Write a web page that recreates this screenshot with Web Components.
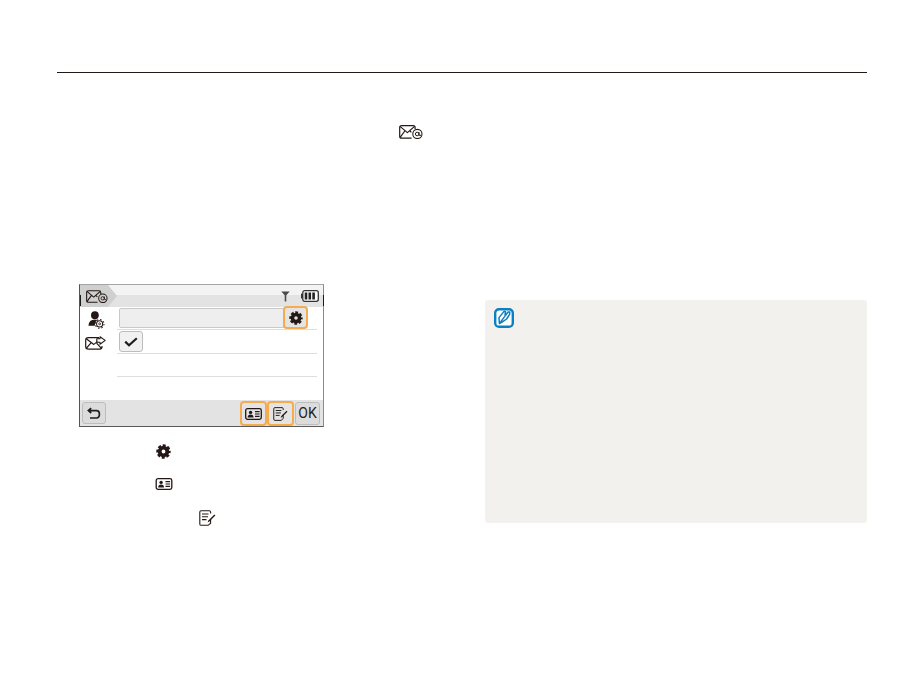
<!DOCTYPE html>
<html>
<head>
<meta charset="utf-8">
<title>Manual page</title>
<style>
  html, body { margin: 0; background: #fff; font-family: "Liberation Sans", Arial, sans-serif; }
</style>
</head>
<body>
<manual-page>
  <ui-icon slot="lead" name="mail-at" size="24 14"></ui-icon>
  <camera-screen slot="left"></camera-screen>
  <icon-line slot="left" indent="77" top="17"><ui-icon name="gear" size="15 15"></ui-icon></icon-line>
  <icon-line slot="left" indent="76" top="19"><ui-icon name="card" size="18 12"></ui-icon></icon-line>
  <icon-line slot="left" indent="120" top="20"><ui-icon name="memo" size="17 16"></ui-icon></icon-line>
  <note-box slot="right"></note-box>
</manual-page>

<script>
// every icon is drawn on its own viewBox, sized through the "size" attribute
const ICONS = {
  'mail-at': `<svg viewBox="0 0 24 14"><g fill="none" stroke="#231815" stroke-width="1.2" stroke-linejoin="round">
      <path d="M12.6 13.2H2.6Q.7 13.2 .7 11.3V2.6Q.7 .7 2.6 .7H14.2Q16.1 .7 16.1 2.6V4.2"/>
      <path d="M1 1.4L8.4 7.6L15.6 1.4M1 12.6L5.8 6M11 6L12.4 7.4"/>
      <circle cx="18.4" cy="9" r="4.6" stroke-width="1.1"/><circle cx="18.2" cy="9" r="1.8" stroke-width="1"/>
      <path d="M20 7V10Q20.6 11 22 10.2" stroke-width="1"/></g></svg>`,
  'gear': `<svg viewBox="0 0 15 15"><g fill="none" stroke="#231815">
      <circle cx="7.5" cy="7.5" r="3.8" stroke-width="3.8"/>
      <circle cx="7.5" cy="7.5" r="6" stroke-width="2.4" stroke-dasharray="3 1.71" stroke-dashoffset="1.5"/></g></svg>`,
  'card': `<svg viewBox="0 0 17 12"><rect x=".7" y=".7" width="15.6" height="10.6" rx="1.8" fill="none" stroke="#231815" stroke-width="1.3"/>
      <circle cx="5.6" cy="4.4" r="1.7" fill="#231815"/><path d="M2.6 9.6Q2.8 6.6 5.6 6.6T8.6 9.6Z" fill="#231815"/>
      <path d="M10 3.6H14.6M10 6H14.6M10 8.4H14.6" stroke="#231815" stroke-width="1.1"/></svg>`,
  'memo': `<svg viewBox="0 0 17 16"><g fill="none" stroke="#231815" stroke-width="1.1">
      <path d="M11.6 9V13.2L9.2 15.3H2.2Q.8 15.3 .8 13.9V2Q.8 .7 2.2 .7H10.2Q11.6 .7 11.6 2V3.4"/>
      <path d="M3 4H9.5M3 6.8H9M3 9.6H7.5"/></g>
      <path d="M8.6 12.4L9.4 10.4L15.4 4.4L16.4 5.4L10.4 11.4Z" fill="#231815"/></svg>`,
  'antenna': `<svg viewBox="0 0 9 11"><path d="M.3 .5H8.7L5.3 4.2V10.6H3.7V4.2Z" fill="#4a4a4a"/></svg>`,
  'battery': `<svg viewBox="0 0 18 12"><rect x="1.8" y=".7" width="15.5" height="10.6" rx="2" fill="#fff" stroke="#333" stroke-width="1.3"/>
      <rect x="0" y="3.6" width="1.8" height="4.8" fill="#333"/>
      <path d="M5 2.6V9.4M8.8 2.6V9.4M12.6 2.6V9.4" stroke="#222" stroke-width="2.6"/></svg>`,
  'user-gear': `<svg viewBox="0 0 17 19"><circle cx="6.8" cy="4.4" r="4.1" fill="#231815"/>
      <path d="M0 15.6Q.4 9 6.8 9Q8.6 9 9.6 9.6Q6.4 11.4 6.8 15.6Z" fill="#231815"/>
      <g fill="none" stroke="#231815"><circle cx="11.8" cy="13.6" r="3.2" stroke-width="1.1"/>
      <circle cx="11.8" cy="13.6" r="4.6" stroke-width="1.1" stroke-dasharray="1.6 2"/><circle cx="11.8" cy="13.6" r="1" stroke-width=".9"/></g></svg>`,
  'mail-send': `<svg viewBox="0 0 21 14"><g fill="none" stroke="#231815" stroke-width="1.2" stroke-linejoin="round">
      <path d="M17 10V10.8Q17 13.2 14.6 13.2H3.4Q.7 13.2 .7 10.6V4.2Q.7 1.6 3.4 1.6H14"/>
      <path d="M1 2.6L8.8 8.4L12.4 5.6M1 12.6L6 6.8M11.6 7.2L16.4 12.4"/>
      <path d="M15 .7L20.2 4.4L15 8.2V6.2H11.8V2.8H15Z" stroke-width="1.1"/></g></svg>`,
  'back': `<svg viewBox="0 0 14 13"><path d="M4.2 1.2L1.4 3.6L4.2 6M1.8 3.6H9.4Q12.4 3.6 12.4 7.2T9.4 11H3" fill="none" stroke="#1e1e1e" stroke-width="1.7"/></svg>`,
  'check': `<svg viewBox="0 0 14 10"><path d="M1.2 4.6L5 8.2L12.8 1.2" fill="none" stroke="#1e1e1e" stroke-width="2.2"/></svg>`,
  'tip': `<svg viewBox="0 0 20 20"><rect x="1.2" y="1.2" width="17.6" height="17.6" rx="3.8" fill="#fff" stroke="#0b7fc4" stroke-width="2.4"/>
      <path d="M5.4 15.6L5 9.6L9.8 3.6H11.4L11 8L14 4H15.8L15.6 6.4L12.6 11L8.4 13.8ZM5.4 15.6L10.6 8.6" fill="none" stroke="#0b7fc4" stroke-width="1.5" stroke-linejoin="round"/></svg>`
};

class UiIcon extends HTMLElement {
  connectedCallback() {
    const [w, h] = (this.getAttribute('size') || '16 16').split(' ');
    const shadow = this.attachShadow({ mode: 'open' });
    shadow.innerHTML = `
      <style>
        :host { display: block; flex: none; width: ${w}px; height: ${h}px; line-height: 0; }
        svg { display: block; width: 100%; height: 100%; }
      </style>
      ${ICONS[this.getAttribute('name')] || ''}`;
  }
}

class IconLine extends HTMLElement {
  constructor() {
    super();
    this.attachShadow({ mode: 'open' }).innerHTML = `
      <style>:host { display: flex; }</style>
      <slot></slot>`;
  }
  connectedCallback() {
    this.style.paddingLeft = this.getAttribute('indent') + 'px';
    this.style.marginTop = this.getAttribute('top') + 'px';
  }
}

const softButton = document.createElement('template');
softButton.innerHTML = `
  <style>
    :host {
      display: flex; align-items: center; justify-content: center;
      box-sizing: border-box; flex: none;
      background: #e9e9e9; border: 1px solid #bdbdbd; border-radius: 3px;
      color: #222; font: 400 14px Roboto, "Liberation Sans", sans-serif;
    }
    :host([hot]) { border: 2px solid #f5ab4e; border-radius: 4px; background: #e4e4e4; }
  </style>
  <slot></slot>`;

class SoftButton extends HTMLElement {
  constructor() {
    super();
    this.attachShadow({ mode: 'open' }).appendChild(softButton.content.cloneNode(true));
  }
}

const cameraScreen = document.createElement('template');
cameraScreen.innerHTML = `
  <style>
    :host {
      display: flex; flex-direction: column; position: relative;
      box-sizing: border-box; width: 245px; height: 143px;
      border: 1px solid #8b8b8b; border-top-color: #a5a5a5;
      border-left-color: #55524f; border-bottom-color: #5c5a58;
      background: #fff;
    }
    .top { height: 22px; flex: none; display: flex; align-items: flex-start;
      background: linear-gradient(#f3f3f3 0 10px, #e3e3e3 10px); }
    .tab { width: 37px; height: 22px; background: #cfcfcf;
      clip-path: polygon(0 0, 28px 0, 37px 11px, 28px 22px, 0 22px);
      display: flex; align-items: center; padding-left: 6px; box-sizing: border-box; }
    .status { margin-left: auto; display: flex; align-items: center; gap: 11px; padding: 5px 4px 0 0; }
    .body { flex: 1; display: grid; grid-template-columns: 37px 1fr; grid-template-rows: 23px 24px 23px; }
    .lead { padding: 4px 0 0 8px; }
    .lead.mail { padding: 6px 0 0 5px; }
    .row { display: flex; align-items: center; margin-right: 6px; border-bottom: 1px solid #dedede; }
    .field { flex: 1; height: 20px; box-sizing: border-box; margin: 0 0 0 2px;
      background: #eeeeee; border: 1px solid #c9c9c9; border-radius: 2px 0 0 2px; }
    .gear { width: 25px; height: 23px; margin: -1px 9px 0 -1px; }
    .tick { width: 24px; height: 21px; margin-left: 2px; background: #f1f1f1; }
    .blank { grid-column: 2; }
    .bottom { height: 26px; flex: none; display: flex; align-items: center;
      background: #e3e3e3; padding: 0 3px 0 2px; margin-top: auto; }
    .back { width: 24px; height: 22px; background: #dcdcdc; }
    .hot { width: 27px; height: 25px; margin-top: 1px; }
    .hot.first { margin-left: auto; }
    .ok { width: 25px; height: 23px; margin: 0 0 0 1px; background: #dcdcdc; }
    .edge { position: absolute; z-index: 1; width: 1px; height: 11px; top: 10px; background: #1d1a18; }
    .edge.l { left: 0; }
    .edge.r { right: -1px; }
  </style>
  <i class="edge l"></i><i class="edge r"></i>
  <div class="top">
    <div class="tab"><ui-icon name="mail-at" size="22 13"></ui-icon></div>
    <div class="status">
      <ui-icon name="antenna" size="9 11"></ui-icon>
      <ui-icon name="battery" size="18 12"></ui-icon>
    </div>
  </div>
  <div class="body">
    <div class="lead"><ui-icon name="user-gear" size="17 18"></ui-icon></div>
    <div class="row">
      <div class="field"></div>
      <soft-button class="gear" hot><ui-icon name="gear" size="14 14"></ui-icon></soft-button>
    </div>
    <div class="lead mail"><ui-icon name="mail-send" size="21 14"></ui-icon></div>
    <div class="row"><soft-button class="tick"><ui-icon name="check" size="14 10"></ui-icon></soft-button></div>
    <div class="row blank"></div>
  </div>
  <div class="bottom">
    <soft-button class="back"><ui-icon name="back" size="14 13"></ui-icon></soft-button>
    <soft-button class="hot first" hot><ui-icon name="card" size="17 12"></ui-icon></soft-button>
    <soft-button class="hot" hot><ui-icon name="memo" size="15 14"></ui-icon></soft-button>
    <soft-button class="ok">OK</soft-button>
  </div>`;

class CameraScreen extends HTMLElement {
  constructor() {
    super();
    this.attachShadow({ mode: 'open' }).appendChild(cameraScreen.content.cloneNode(true));
  }
}

class NoteBox extends HTMLElement {
  constructor() {
    super();
    this.attachShadow({ mode: 'open' }).innerHTML = `
      <style>
        :host {
          display: block; box-sizing: border-box; height: 223px;
          padding: 8px 9px; background: #f3f1ee; border-radius: 3px;
        }
      </style>
      <ui-icon name="tip" size="20 20"></ui-icon>
      <slot></slot>`;
  }
}

const manualPage = document.createElement('template');
manualPage.innerHTML = `
  <style>
    :host { display: block; width: 924px; height: 697px; box-sizing: border-box; padding: 72px 57px 0; }
    .rule { height: 1px; border-top: 1px solid #231815; margin-bottom: 51px; }
    .lead { display: flex; padding-left: 342px; height: 14px; }
    .cols { display: grid; grid-template-columns: 428px 382px; margin-top: 145px; }
    .left { padding-left: 22px; }
    .right { padding-top: 16px; }
  </style>
  <div class="rule"></div>
  <div class="lead"><slot name="lead"></slot></div>
  <div class="cols">
    <div class="left"><slot name="left"></slot></div>
    <div class="right"><slot name="right"></slot></div>
  </div>`;

class ManualPage extends HTMLElement {
  constructor() {
    super();
    this.attachShadow({ mode: 'open' }).appendChild(manualPage.content.cloneNode(true));
  }
}

customElements.define('ui-icon', UiIcon);
customElements.define('icon-line', IconLine);
customElements.define('soft-button', SoftButton);
customElements.define('camera-screen', CameraScreen);
customElements.define('note-box', NoteBox);
customElements.define('manual-page', ManualPage);
</script>
</body>
</html>
